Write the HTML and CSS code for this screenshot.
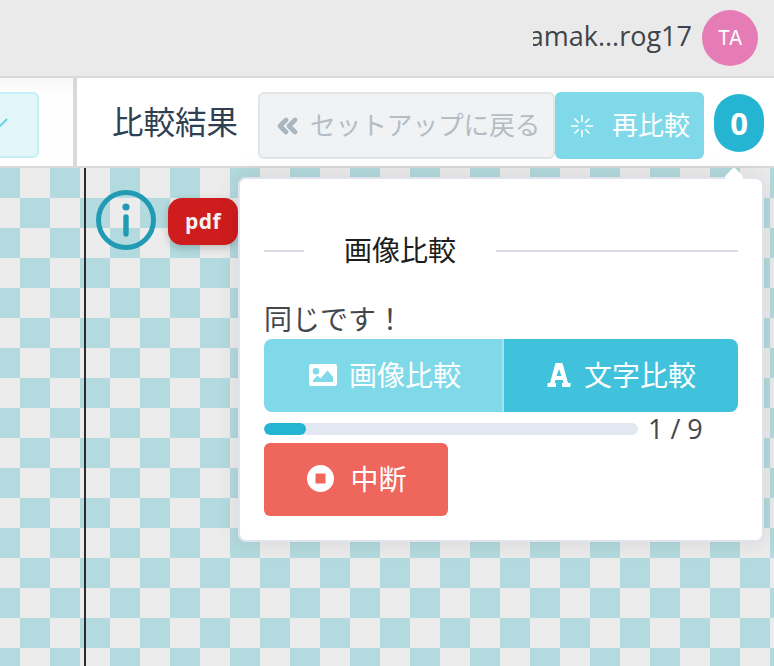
FILE: index.html
```html
<!DOCTYPE html>
<html lang="ja">

<head>
    <meta charset="UTF-8">
    <title>比較結果</title>
    <link rel="stylesheet" href="styles.css">
</head>

<body>
    <header class="topbar">
        <span class="user-name">amak...rog17</span>
        <span class="avatar">TA</span>
    </header>

    <div class="toolbar">
        <div class="toolbar-left">
            <div class="ok-button">
                <svg width="16" height="16" viewBox="0 0 16 16"><path d="M0 14L8 6" stroke="#5fd0e6" stroke-width="1.8" fill="none" /></svg>
            </div>
        </div>
        <div class="toolbar-right">
            <h1 class="title">比較結果</h1>
            <button class="btn btn-back">
                <svg width="24" height="18" viewBox="0 0 24 18"><path d="M11 3L5 9l6 6M20 3l-6 6 6 6" stroke="#a9b5bf" stroke-width="4.600" fill="none" stroke-linejoin="round" stroke-linecap="round" /></svg>
                セットアップに戻る
            </button>
            <button class="btn btn-retry">
                <svg class="spin" width="24" height="24" viewBox="0 0 24 24" stroke="#fff" stroke-width="1.6" stroke-linecap="round"><path d="M12 1.500v6M12 16.500v6M1.500 12h6M16.500 12h6M5 5l3.500 3.500M15.500 15.500L19 19M19 5l-3.500 3.500M8.500 15.500L5 19" /></svg>
                再比較
            </button>
            <span class="count">0</span>
        </div>
    </div>

    <main class="canvas">
        <div class="marker"></div>
        <div class="canvas-tools">
            <svg width="60" height="60" viewBox="0 0 60 60">
                <circle cx="30" cy="30" r="27.500" fill="none" stroke="#219bb3" stroke-width="5" />
                <circle cx="30" cy="17" r="3.600" fill="#219bb3" />
                <path d="M30 27v17" stroke="#219bb3" stroke-width="5.400" stroke-linecap="round" />
            </svg>
            <span class="pdf-badge">pdf</span>
        </div>

        <section class="popover">
            <div class="popover-title">
                <span class="rule rule-short"></span>
                <span class="popover-name">画像比較</span>
                <span class="rule rule-long"></span>
            </div>
            <p class="status">同じです！</p>
            <div class="tabs">
                <button class="tab tab-image">
                    <svg width="28" height="22" viewBox="0 0 28 22">
                        <path fill="#fff" fill-rule="evenodd" d="M2 0h24a2 2 0 0 1 2 2v18a2 2 0 0 1-2 2H2a2 2 0 0 1-2-2V2a2 2 0 0 1 2-2zM7 4a3.300 3.300 0 1 0 0 6.600A3.300 3.300 0 0 0 7 4zM4 18h20v-5l-5.500-6.500-7 8-3-3L4 16z" />
                    </svg>
                    画像比較
                </button>
                <button class="tab tab-text">
                    <svg width="26" height="26" viewBox="0 0 26 26">
                        <path fill="#fff" fill-rule="evenodd" d="M9.500 1h7L22 21h2.500v4H16v-4h1.500l-.8-3H9.300l-.8 3H10v4H1.500v-4H4L9.500 1zM13 7l-2.500 7h5L13 7z" />
                    </svg>
                    文字比較
                </button>
            </div>
            <div class="progress-row">
                <div class="progress">
                    <div class="progress-bar" style="width: 11.200%"></div>
                </div>
                <span class="progress-text">1 / 9</span>
            </div>
            <button class="btn-stop">
                <svg width="27" height="27" viewBox="0 0 27 27">
                    <path fill="#fff" fill-rule="evenodd" d="M13.500 0a13.500 13.500 0 1 1 0 27 13.500 13.500 0 0 1 0-27zM8.500 8.500v10h10v-10z" />
                </svg>
                中断
            </button>
        </section>
    </main>
</body>

</html>
```

FILE: styles.css
```css
* {
    box-sizing: border-box;
}

html,
body {
    margin: 0;
    height: 100%;
    overflow: hidden;
}

body {
    font-family: "Open Sans", "Noto Sans CJK JP", sans-serif;
    display: flex;
    flex-direction: column;
    color: #3c4248;
    background: #fff;
}

button {
    font-family: inherit;
    margin: 0;
    border: none;
}

.topbar {
    height: 78px;
    flex: none;
    background: #eaeaea;
    border-bottom: 2px solid #d9d9d9;
    display: flex;
    align-items: center;
    justify-content: flex-end;
    padding: 0 16px 0 0;
}

.user-name {
    width: 159px;
    direction: rtl;
    overflow: hidden;
    white-space: nowrap;
    font-size: 27px;
    line-height: 36px;
    color: #3f4449;
    margin: 0 10px 4px 0;
}

.avatar {
    width: 56px;
    height: 56px;
    border-radius: 50%;
    background: #e67cb5;
    color: #fff;
    font-family: "Inter", sans-serif;
    font-size: 20px;
    display: flex;
    align-items: center;
    justify-content: center;
}

.toolbar {
    height: 90px;
    flex: none;
    display: flex;
    border-bottom: 2px solid #d9d9d9;
}

.toolbar-left {
    width: 77px;
    flex: none;
    background: linear-gradient(#f7f7f7, #fefefe 16px);
    border-right: 4px solid #d9d9d9;
    padding-top: 14px;
    overflow: hidden;
}

.ok-button {
    width: 60px;
    height: 66px;
    margin-left: -21px;
    background: #e2f6fa;
    border: 2px solid #c4eff6;
    border-radius: 6px;
    display: flex;
    align-items: center;
    padding: 0 0 8px 18px;
}

.toolbar-right {
    flex: 1;
    display: flex;
    align-items: flex-start;
    padding: 14px 0 0 35px;
    min-width: 0;
}

.title {
    margin: 0;
    width: 146px;
    flex: none;
    font-size: 31.5px;
    font-weight: 400;
    line-height: 60px;
    color: #2f4052;
    white-space: nowrap;
}

.btn {
    height: 67px;
    flex: none;
    border-radius: 6px;
    font-size: 26px;
    display: flex;
    align-items: center;
    white-space: nowrap;
}

.btn-back {
    width: 297px;
    background: #f0f2f4;
    border: 2px solid #e2e5e8;
    color: #b4bdc4;
    font-size: 25.6px;
    padding: 0 0 3px 15px;
    gap: 11px;
}

.btn-back svg {
    margin-top: 3px;
}

.btn-retry {
    width: 149px;
    background: #7fd9e8;
    color: #fff;
    padding: 0 0 3px 15px;
    gap: 18px;
}

.btn-retry svg {
    margin-top: 3px;
}

.count {
    width: 50px;
    height: 58px;
    flex: none;
    margin: 2px 0 0 10px;
    border-radius: 25px;
    background: #26b4d3;
    color: #fff;
    font-size: 31px;
    font-weight: 700;
    display: flex;
    align-items: center;
    justify-content: center;
}

.canvas {
    flex: 1;
    position: relative;
    background-color: #ececec;
    background-image: conic-gradient(#b3dade 25%, #ececec 0 50%, #b3dade 0 75%, #ececec 0);
    background-size: 60px 60px;
    background-position: 20px 0;
}

.marker {
    position: absolute;
    left: 84px;
    top: 0;
    bottom: 0;
    width: 2px;
    background: #2c2c2c;
}

.canvas-tools {
    display: flex;
    align-items: center;
    padding: 22px 0 0 96px;
}

.pdf-badge {
    width: 70px;
    height: 47px;
    margin: 2px 0 0 12px;
    border-radius: 14px;
    background: #cf1c1c;
    color: #f3f3f3;
    font-size: 21px;
    font-weight: 700;
    letter-spacing: 0.5px;
    display: flex;
    align-items: center;
    justify-content: center;
    box-shadow: 0 3px 8px rgba(0, 0, 0, 0.2);
}

.popover {
    position: absolute;
    left: 238px;
    top: 9px;
    width: 526px;
    height: 365px;
    background: #fff;
    border: 2px solid #e1e4ee;
    border-radius: 8px;
    padding: 0 24px;
    box-shadow: 0 0 24px rgba(0, 0, 0, 0.1);
}

.popover::before {
    content: "";
    position: absolute;
    right: 21px;
    top: -9px;
    width: 14px;
    height: 14px;
    background: #fff;
    transform: rotate(45deg);
    border-radius: 2px;
}

.popover-title {
    display: flex;
    align-items: center;
    height: 38px;
    margin-top: 53px;
    font-size: 28px;
    color: #1d1d1d;
    white-space: nowrap;
}

.popover-name {
    margin-bottom: 5px;
}

.rule {
    height: 2px;
    background: #d9dce6;
}

.rule-short {
    width: 40px;
    margin-right: 40px;
}

.rule-long {
    flex: 1;
    margin-left: 40px;
}

.status {
    margin: 32px 0 0;
    font-size: 28px;
    line-height: 34px;
    height: 35px;
    color: #44484d;
    white-space: nowrap;
}

.tabs {
    display: flex;
    height: 73px;
    border-radius: 8px;
    overflow: hidden;
    margin-top: 2px;
}

.tab {
    flex: 1;
    color: #fff;
    font-size: 28px;
    display: flex;
    align-items: center;
    justify-content: center;
    gap: 12px;
    white-space: nowrap;
    padding: 0 6px 3px;
}

.tab svg {
    margin-top: 1px;
}

.tab-image {
    background: #7fd9e8;
    border-right: 2px solid #a5e5ef;
    flex: none;
    width: 240px;
    padding-left: 10px;
}

.tab-text {
    background: #40c1dc;
}

.progress-row {
    display: flex;
    align-items: flex-start;
    height: 20px;
    margin-top: 11px;
}

.progress {
    width: 374px;
    height: 12px;
    border-radius: 6px;
    background: #e3e7f1;
    overflow: hidden;
}

.progress-bar {
    height: 100%;
    border-radius: 6px;
    background: #26b4d3;
}

.progress-text {
    margin: -10px 0 0 10px;
    font-size: 27px;
    line-height: 32px;
    color: #44484d;
}

.btn-stop {
    display: flex;
    align-items: center;
    justify-content: center;
    gap: 16px;
    width: 184px;
    height: 73px;
    border-radius: 6px;
    background: #ee665c;
    color: #fff;
    font-size: 28px;
    padding: 0 6px 3px 8px;
}

.btn-stop svg {
    margin-top: 1px;
}
```
